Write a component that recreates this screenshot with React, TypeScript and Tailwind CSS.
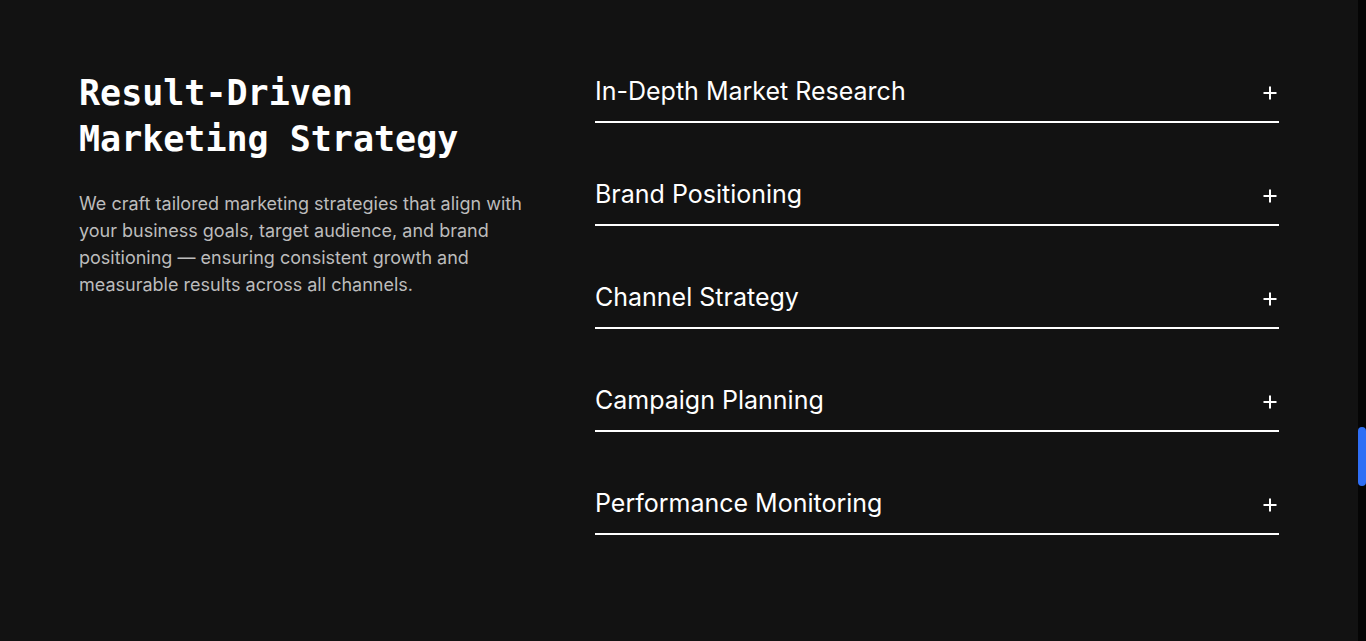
import React from "react";

const items = [
  "In-Depth Market Research",
  "Brand Positioning",
  "Channel Strategy",
  "Campaign Planning",
  "Performance Monitoring",
];

function Plus() {
  return (
    <svg width="14" height="14" viewBox="0 0 14 14" fill="none" className="shrink-0">
      <path d="M7 0.5V13.5M0.5 7H13.5" stroke="white" strokeWidth="2" />
    </svg>
  );
}

export default function App() {
  return (
    <div className="flex h-[641px] w-full bg-[#121212] overflow-hidden">
      <main className="flex-1 flex pt-[70px] pl-[79px] pr-[79px]">
        <section className="w-[460px] shrink-0">
          <h2
            className="text-white font-bold text-[35px] leading-[46px] tracking-[0px]"
            style={{ fontFamily: '"DejaVu Sans Mono", monospace' }}
          >
            Result-Driven
            <br />
            Marketing Strategy
          </h2>
          <p
            className="mt-[28px] text-[#bcbcbc] text-[18px] leading-[27px] w-[460px]"
            style={{ fontFamily: 'Inter, "Noto Sans", sans-serif' }}
          >
            We craft tailored marketing strategies that align with your business goals, target audience, and brand
            positioning — ensuring consistent growth and measurable results across all channels.
          </p>
        </section>
        <section className="ml-[56px] flex-1 flex flex-col pt-[6px] gap-[56px]">
          {items.map((t) => (
            <div key={t} className="flex items-center justify-between pb-[15px] border-b-2 border-white">
              <span
                className="text-white text-[25px] leading-[30px]"
                style={{ fontFamily: 'Inter, "Noto Sans", sans-serif' }}
              >
                {t}
              </span>
              <span className="mr-[2px] mt-[3px]">
                <Plus />
              </span>
            </div>
          ))}
        </section>
      </main>
      <aside className="w-2 shrink-0 bg-[#050505] flex flex-col">
        <div className="mt-[427px] h-[59px] w-2 rounded-full bg-[#2f6ff5]" />
      </aside>
    </div>
  );
}
